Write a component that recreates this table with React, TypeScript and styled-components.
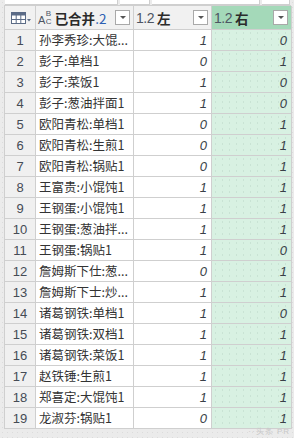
import { Fragment } from 'react';
import styled, { createGlobalStyle } from 'styled-components';

const GlobalStyle = createGlobalStyle`
  html, body {
    margin: 0;
    padding: 0;
    background: #ebebeb;
  }
  * {
    box-sizing: border-box;
  }
`;

const Page = styled.div`
  width: 294px;
  height: 438px;
  overflow: hidden;
  background-color: #ebebeb;
  background-image: radial-gradient(#dcdcdc 0.6px, transparent 0.7px);
  background-size: 5px 5px;
  font-family: 'Noto Sans CJK SC', 'Noto Sans', sans-serif;
  position: relative;
`;

const TopStrip = styled.div`
  height: 5px;
  display: grid;
  grid-template-columns: 5px 113px 2px 30px 2px 108px 2px 28px;
`;

const TopPiece = styled.div<{ $blank?: boolean }>`
  background: ${(p) => (p.$blank ? 'transparent' : '#ffffff')};
  border-bottom: ${(p) => (p.$blank ? 'none' : '1px solid #cfcfcf')};
  border-right: ${(p) => (p.$blank ? 'none' : '1px solid #cfcfcf')};
`;

const Grid = styled.div`
  margin-left: 4px;
  width: 287px;
  display: grid;
  grid-template-columns: 31px 98px 78px 80px;
  grid-auto-rows: 21px;
  grid-template-rows: 24px;
  border-left: 1px solid #cfcfcf;
  border-top: 1px solid #cfcfcf;
`;

const HeadCell = styled.div<{ $accent?: boolean }>`
  display: flex;
  align-items: center;
  gap: 3px;
  padding: 0 3px 0 2px;
  background: ${(p) => (p.$accent ? '#a4d9b9' : '#f1f1f1')};
  border-right: 1px solid #cfcfcf;
  border-bottom: 1px solid #cfcfcf;
  font-size: 13.5px;
  font-weight: 700;
  color: #2b2b2b;
  white-space: nowrap;
  overflow: hidden;
`;

const TypeNum = styled.span`
  font-family: 'Liberation Sans', Arial, sans-serif;
  font-weight: 400;
  font-size: 14px;
  color: #4d5563;
  letter-spacing: -0.5px;
`;

const Abc = styled.span`
  display: grid;
  grid-template-columns: auto auto;
  grid-template-rows: 8px 8px;
  font-family: 'Liberation Sans', Arial, sans-serif;
  font-weight: 400;
  color: #4d5563;
  line-height: 8px;
  flex: none;
`;

const AbcA = styled.span`
  grid-row: 1 / 3;
  align-self: end;
  font-size: 11px;
  line-height: 11px;
`;

const AbcSmall = styled.span`
  font-size: 8px;
  line-height: 8px;
  padding-left: 0.5px;
`;

const HeadLabel = styled.span`
  flex: 1;
  min-width: 0;
`;

const Blue = styled.span`
  color: #2c5fb3;
  font-weight: 400;
`;

const DropBox = styled.div`
  width: 15px;
  height: 15px;
  flex: none;
  background: #ffffff;
  border: 1px solid #a9a9a9;
  display: flex;
  align-items: center;
  justify-content: center;
  &::after {
    content: '';
    border-left: 3px solid transparent;
    border-right: 3px solid transparent;
    border-top: 3px solid #555555;
  }
`;

const IndexHead = styled(HeadCell)`
  padding: 0 0 0 6px;
  gap: 1px;
`;

const IndexCell = styled.div`
  display: flex;
  align-items: center;
  justify-content: center;
  background-color: #f0f0f0;
  background-image: radial-gradient(#e0e0e0 0.6px, transparent 0.7px);
  background-size: 4px 4px;
  border-right: 1px solid #cfcfcf;
  border-bottom: 1px solid #cfcfcf;
  font-family: 'Liberation Sans', Arial, sans-serif;
  font-size: 13px;
  color: #454b55;
`;

const TextCell = styled.div`
  padding: 0 1px 0 3px;
  line-height: 20px;
  background: #ffffff;
  border-right: 1px solid #cfcfcf;
  border-bottom: 1px solid #cfcfcf;
  font-size: 12.5px;
  color: #333333;
  white-space: nowrap;
  overflow: hidden;
`;

const NumCell = styled.div<{ $accent?: boolean }>`
  display: flex;
  align-items: center;
  justify-content: flex-end;
  padding-right: 4px;
  background-color: ${(p) => (p.$accent ? '#d8f1e2' : '#ffffff')};
  background-image: ${(p) =>
    p.$accent ? 'radial-gradient(#c9e3d4 0.6px, transparent 0.7px)' : 'none'};
  background-size: 7px 6px;
  border-right: 1px solid #cfcfcf;
  border-bottom: 1px solid #cfcfcf;
  font-family: 'Liberation Sans', Arial, sans-serif;
  font-style: italic;
  font-size: 13px;
  color: #3a3f48;
`;

const Watermark = styled.div`
  position: absolute;
  right: 4px;
  bottom: 1px;
  font-size: 8px;
  color: #c8c8c8;
  letter-spacing: 1px;
  font-family: 'Liberation Sans', Arial, sans-serif;
`;

const TableIcon = () => (
  <svg width="20" height="12" viewBox="0 0 20 12">
    <rect x="0.5" y="0.5" width="14" height="11" fill="#ffffff" stroke="#5b6b86" />
    <rect x="0.5" y="0.5" width="14" height="3" fill="#5b6b86" />
    <line x1="5.2" y1="3" x2="5.2" y2="12" stroke="#5b6b86" />
    <line x1="9.8" y1="3" x2="9.8" y2="12" stroke="#5b6b86" />
    <line x1="0" y1="7.5" x2="15" y2="7.5" stroke="#5b6b86" />
    <path d="M16 7 L20 7 L18 9.5 Z" fill="#5b6b86" />
  </svg>
);

// names as the grid shows them (long ones cut with "...")
const rows: [string, number, number][] = [
  ['孙李秀珍:大馄...', 1, 0],
  ['彭子:单档1', 0, 1],
  ['彭子:菜饭1', 1, 0],
  ['彭子:葱油拌面1', 1, 0],
  ['欧阳青松:单档1', 0, 1],
  ['欧阳青松:生煎1', 0, 1],
  ['欧阳青松:锅贴1', 0, 1],
  ['王富贵:小馄饨1', 1, 1],
  ['王钢蛋:小馄饨1', 1, 1],
  ['王钢蛋:葱油拌...', 1, 1],
  ['王钢蛋:锅贴1', 1, 0],
  ['詹姆斯下仕:葱...', 0, 1],
  ['詹姆斯下士:炒...', 1, 1],
  ['诸葛钢铁:单档1', 1, 0],
  ['诸葛钢铁:双档1', 1, 1],
  ['诸葛钢铁:菜饭1', 1, 1],
  ['赵铁锤:生煎1', 1, 1],
  ['郑喜定:大馄饨1', 1, 1],
  ['龙淑芬:锅贴1', 0, 1],
];

const App = () => {
  return (
    <>
      <GlobalStyle />
      <Page>
        <TopStrip>
          <TopPiece $blank />
          <TopPiece />
          <TopPiece $blank />
          <TopPiece />
          <TopPiece $blank />
          <TopPiece />
          <TopPiece $blank />
          <TopPiece />
        </TopStrip>
        <Grid>
          <IndexHead>
            <TableIcon />
          </IndexHead>
          <HeadCell>
            <Abc>
              <AbcA>A</AbcA>
              <AbcSmall>B</AbcSmall>
              <AbcSmall>C</AbcSmall>
            </Abc>
            <HeadLabel>
              已合并<Blue>.2</Blue>
            </HeadLabel>
            <DropBox />
          </HeadCell>
          <HeadCell>
            <TypeNum>1.2</TypeNum>
            <HeadLabel>左</HeadLabel>
            <DropBox />
          </HeadCell>
          <HeadCell $accent>
            <TypeNum>1.2</TypeNum>
            <HeadLabel>右</HeadLabel>
            <DropBox />
          </HeadCell>
          {rows.map(([name, left, right], i) => (
            <Fragment key={i}>
              <IndexCell>{i + 1}</IndexCell>
              <TextCell>{name}</TextCell>
              <NumCell>{left}</NumCell>
              <NumCell $accent>{right}</NumCell>
            </Fragment>
          ))}
        </Grid>
        <Watermark>··头条 PR</Watermark>
      </Page>
    </>
  );
};

export default App;
